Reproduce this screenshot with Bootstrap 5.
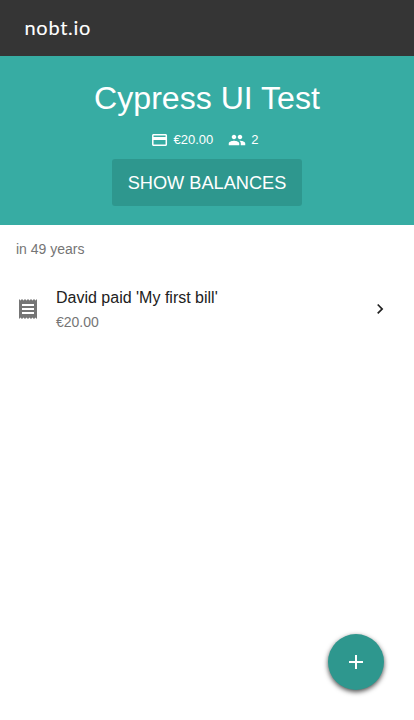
<!DOCTYPE html>
<html lang="en">
<head>
<meta charset="utf-8">
<meta name="viewport" content="width=device-width, initial-scale=1">
<title>nobt.io</title>
<link href="https://cdn.jsdelivr.net/npm/bootstrap@5.3.0/dist/css/bootstrap.min.css" rel="stylesheet">
<style>
body{font-family:"Liberation Sans",Arial,sans-serif;color:#212121;min-height:100vh}
svg{display:block;fill:currentColor}
.topbar{height:56px;background:#353535;padding:0 24.500px}
.brand{font:400 20px/24px Lato,sans-serif;letter-spacing:.7px;color:#fff;margin-top:-3px;-webkit-text-stroke:.1px #fff}
.hero{height:169px;background:#37aca3;padding-top:22px}
.hero h1{font-size:32.100px;line-height:40px;font-weight:400}
.stats{font-size:13px;line-height:18px;margin-top:13px;gap:15px;padding-right:5px}
.stat{gap:5px}
.btn-balances{--bs-btn-color:#fff;--bs-btn-bg:#2e978e;--bs-btn-hover-bg:#2a8a82;--bs-btn-hover-color:#fff;--bs-btn-border-radius:3px;width:190px;height:47px;padding:3px 0 0;font-size:18.2px;margin-top:9.5px;border:0}
.group-label{font-size:14px;line-height:20px;color:#757575;padding:14px 16px 0}
.bill{--bs-list-group-bg:transparent;height:72px;padding:0 22px 0 16px;margin-top:14px}
.bill-title{font-size:16px;line-height:24px;color:#212121}
.bill-sum{font-size:14px;line-height:20px;color:#757575;margin-top:2px}
.bill-icon{color:#757575;margin-right:16px}
.fab{width:56px;height:56px;right:30px;bottom:30px;background:#2e978e;box-shadow:0 2px 5px rgba(0,0,0,.7)}
</style>
<script src="https://cdn.jsdelivr.net/npm/bootstrap@5.3.0/dist/js/bootstrap.bundle.min.js"></script>
</head>
<body class="bg-white">
<header class="topbar d-flex align-items-center"><a class="brand text-decoration-none" href="#">nobt.io</a></header>
<section class="hero d-flex flex-column align-items-center text-white">
  <h1 class="m-0">Cypress UI Test</h1>
  <div class="stats d-flex">
    <div class="stat d-flex align-items-center"><svg width="18" height="18" viewBox="0.600 0 24 24"><path d="M20 4H4c-1.110 0-1.990.890-1.990 2L2 18c0 1.110.890 2 2 2h16c1.110 0 2-.890 2-2V6c0-1.110-.890-2-2-2zm0 14H4v-6h16v6zm0-10H4V6h16v2z"/></svg><span>€20.00</span></div>
    <div class="stat d-flex align-items-center"><svg width="18" height="18" viewBox="0 0 24 24"><path d="M16 11c1.660 0 2.990-1.340 2.990-3S17.660 5 16 5s-3 1.340-3 3 1.340 3 3 3zm-8 0c1.660 0 2.990-1.340 2.990-3S9.660 5 8 5 5 6.340 5 8s1.340 3 3 3zm0 2c-2.330 0-7 1.170-7 3.500V19h14v-2.500c0-2.330-4.670-3.500-7-3.500zm8 0c-.290 0-.620.020-.970.050 1.160.840 1.970 1.970 1.970 3.450V19h6v-2.500c0-2.330-4.670-3.500-7-3.500z"/></svg><span>2</span></div>
  </div>
  <button type="button" class="btn btn-balances text-uppercase">Show balances</button>
</section>
<main>
  <div class="group-label">in 49 years</div>
  <div class="list-group list-group-flush">
    <a href="#" class="bill list-group-item list-group-item-action border-0 d-flex align-items-center">
      <svg class="bill-icon" width="24" height="24" viewBox="0 0 24 24"><path d="M18 17H6v-2h12v2zm0-4H6v-2h12v2zm0-4H6V7h12v2zM3 22l1.500-1.500L6 22l1.500-1.500L9 22l1.500-1.500L12 22l1.500-1.500L15 22l1.500-1.500L18 22l1.500-1.500L21 22V2l-1.500 1.500L18 2l-1.500 1.500L15 2l-1.500 1.500L12 2l-1.500 1.500L9 2 7.500 3.500 6 2 4.500 3.500 3 2v20z"/></svg>
      <div class="flex-grow-1"><div class="bill-title">David paid 'My first bill'</div><div class="bill-sum">€20.00</div></div>
      <svg width="24" height="24" viewBox="0 0 24 24" color="#212121"><path transform="translate(1.900 1.900) scale(.84)" d="M10 6L8.590 7.410 13.170 12l-4.580 4.590L10 18l6-6z"/></svg>
    </a>
  </div>
</main>
<button type="button" class="fab btn rounded-circle border-0 p-0 position-fixed d-flex align-items-center justify-content-center text-white" aria-label="Add bill"><svg width="24" height="24" viewBox="0 0 24 24"><path d="M19 13h-6v6h-2v-6H5v-2h6V5h2v6h6v2z"/></svg></button>
</body>
</html>
